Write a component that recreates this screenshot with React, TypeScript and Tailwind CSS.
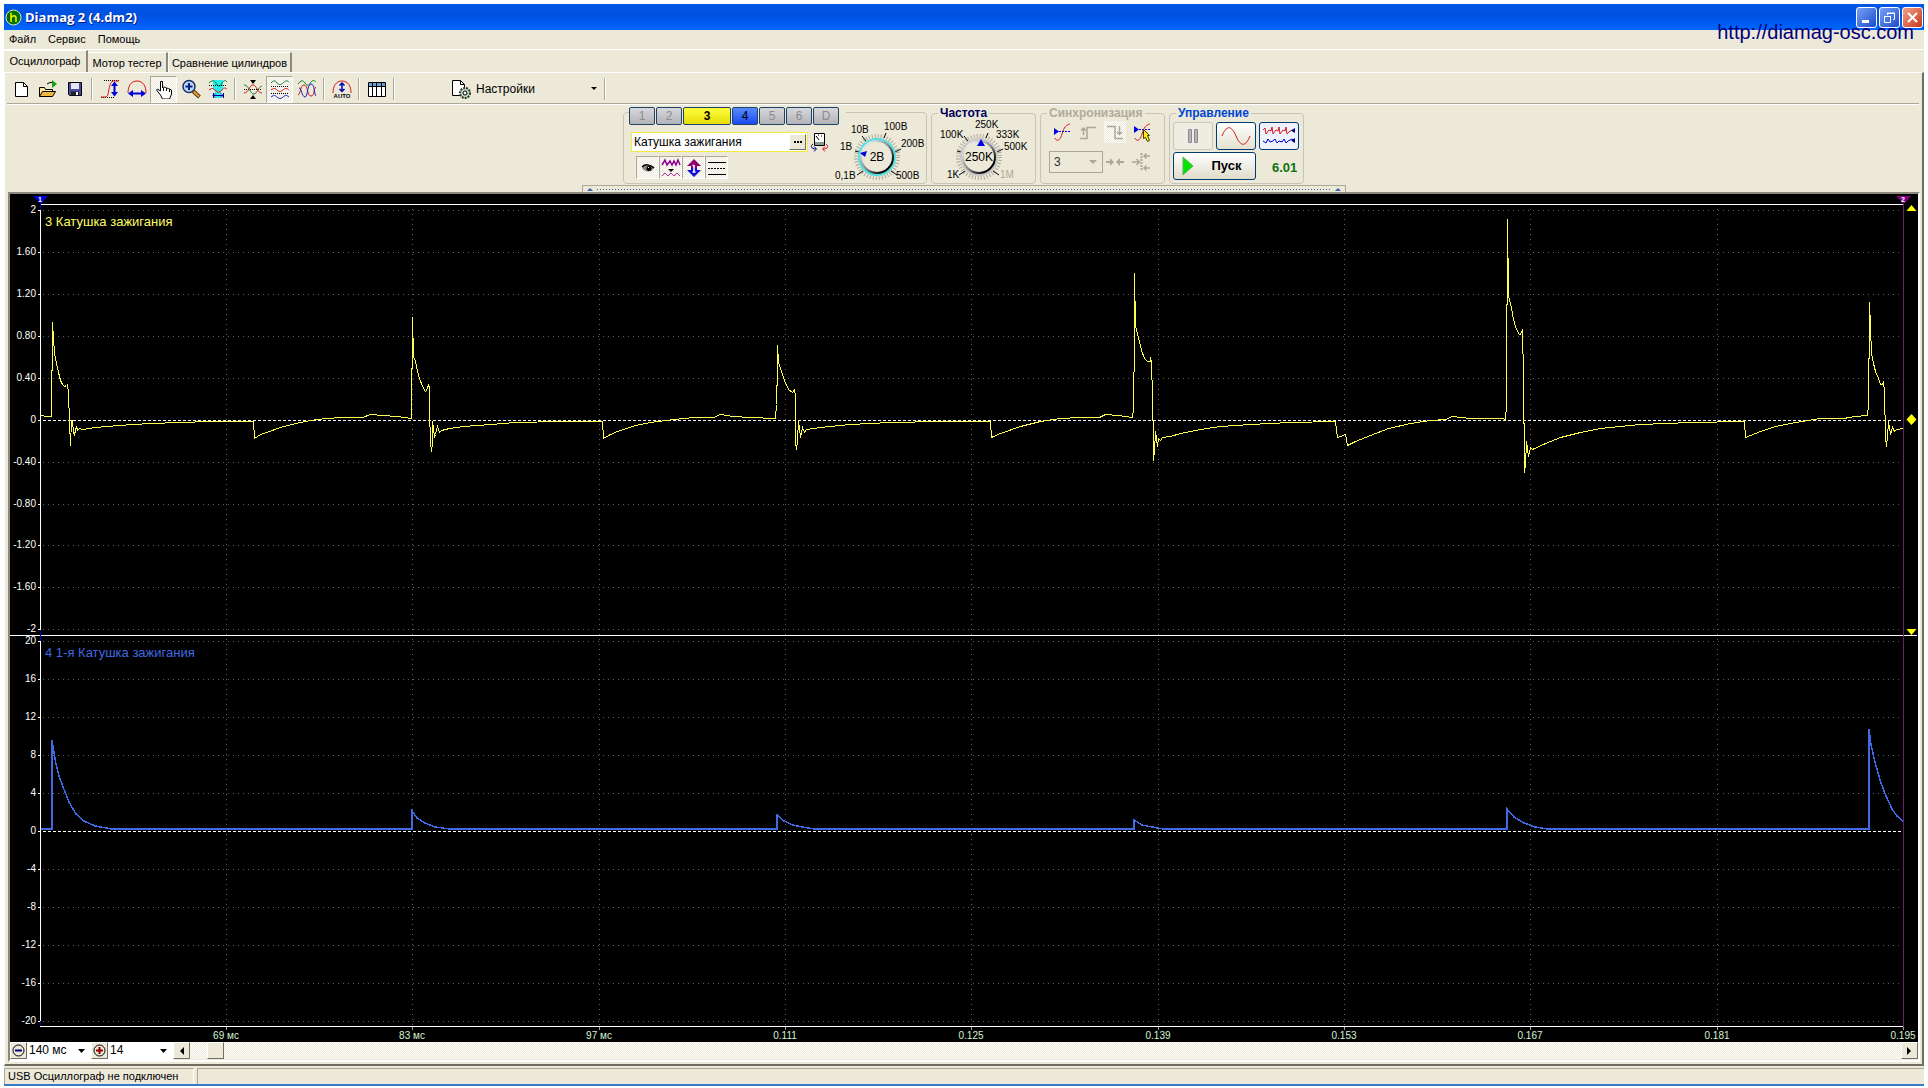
import React from 'react';
import clsx from 'clsx';

const GRID_X = [226, 412, 599, 785, 971, 1158, 1344, 1530, 1717, 1903];
const X_LABELS = ['69 мс', '83 мс', '97 мс', '0.111', '0.125', '0.139', '0.153', '0.167', '0.181', '0.195'];

const CH3_AXIS = [
  { y: 210, label: '2' },
  { y: 252, label: '1.60' },
  { y: 294, label: '1.20' },
  { y: 336, label: '0.80' },
  { y: 378, label: '0.40' },
  { y: 420, label: '0' },
  { y: 462, label: '-0.40' },
  { y: 504, label: '-0.80' },
  { y: 545, label: '-1.20' },
  { y: 587, label: '-1.60' },
  { y: 629, label: '-2' },
];

const CH4_AXIS = [
  { y: 641, label: '20' },
  { y: 679, label: '16' },
  { y: 717, label: '12' },
  { y: 755, label: '8' },
  { y: 793, label: '4' },
  { y: 831, label: '0' },
  { y: 869, label: '-4' },
  { y: 907, label: '-8' },
  { y: 945, label: '-12' },
  { y: 983, label: '-16' },
  { y: 1021, label: '-20' },
];

const CH3_WAVE =
  '41,415 46,416 51,416 51,370 52,370 52,322 53,338 54,353 56,363 58,372 60,380 62,384 64,386 66,385 67,384 68,393 69,422 70,445 71,420 72,420 73,432 74,434 76,426 77,430 79,428 82,429 95,427 118,425 150,423 180,422 209,421 253,421 ' +
  '254,438 260,434 266,432 280,427 295,423 310,420 326,418 341,417 362,417 370,414 382,415 397,416 411,418 411,368 412,368 412,317 413,356 415,361 417,371 419,378 422,386 425,391 427,388 428,384 429,388 429,411 430,442 431,451 432,443 432,421 433,428 434,437 435,434 437,426 439,432 441,430 449,428 463,426 490,424 515,422 560,421 602,421 ' +
  '603,438 610,434 617,431 635,425 650,422 673,419 694,417 713,417 720,414 733,416 750,417 775,418 776,404 777,367 777,345 778,362 781,371 784,380 788,389 792,392 794,389 795,395 795,442 796,449 797,440 798,420 800,437 802,427 804,432 806,429 820,427 850,424 890,422 940,421 990,421 ' +
  '991,437 1000,433 1020,426 1040,421 1060,418 1080,417 1099,417 1105,414 1118,415 1132,417 1133,408 1134,337 1134,273 1135,326 1138,337 1141,350 1144,358 1147,361 1150,361 1150,357 1151,361 1152,397 1153,443 1153,460 1154,450 1155,431 1157,446 1158,438 1160,440 1162,437 1170,436 1180,433 1200,429 1220,426 1250,424 1290,422 1335,421 ' +
  '1337,437 1340,436 1345,434 1347,445 1355,441 1370,435 1388,428 1410,423 1430,420 1445,419 1452,416 1470,418 1503,418 1505,420 1506,404 1506,304 1507,304 1507,219 1508,295 1511,307 1513,319 1516,329 1519,334 1521,333 1522,329 1522,334 1523,372 1524,472 1525,464 1526,441 1528,456 1530,447 1532,449 1545,443 1560,437 1580,432 1600,428 1620,426 1640,424 1690,422 1744,421 ' +
  '1745,437 1760,431 1775,426 1795,422 1820,418 1843,418 1855,416 1867,415 1868,405 1868,358 1869,358 1869,302 1870,327 1871,353 1873,363 1875,371 1878,378 1880,384 1882,384 1883,381 1884,391 1885,437 1886,446 1887,436 1888,421 1890,434 1892,427 1894,431 1896,429 1903,428';

const CH4_WAVE =
  '41,829 52,829 52,740 54,752 56,764 59,776 63,787 69,802 76,814 84,821 95,826 112,829 ' +
  '412,829 412,811 417,818 425,823 435,827 450,829 777,829 777,815 784,821 793,825 802,827 815,829 ' +
  '1134,829 1134,820 1142,825 1152,827 1163,829 1507,829 1507,809 1514,817 1524,823 1535,827 1548,829 ' +
  '1869,829 1869,729 1871,745 1875,762 1880,780 1886,796 1892,809 1897,816 1903,821';

type IconProps = { children: React.ReactNode; w?: number; h?: number };

const Icon: React.FC<IconProps> = ({ children, w = 20, h = 20 }) => (
  <svg width={w} height={h} viewBox={`0 0 ${w} ${h}`} fill="none" className="shrink-0" aria-hidden="true">
    {children}
  </svg>
);

type ToolProps = { label: string; pressed?: boolean; children: React.ReactNode };

const Tool: React.FC<ToolProps> = ({ label, pressed, children }) => (
  <button
    type="button"
    aria-label={label}
    aria-pressed={pressed}
    className={clsx(
      'flex h-[27px] w-[27px] items-center justify-center border',
      pressed
        ? 'border-t-[#aca899] border-l-[#aca899] border-r-white border-b-white bg-[repeating-conic-gradient(#ece9d8_0_25%,#fff_0_50%)] bg-[length:2px_2px]'
        : 'border-transparent'
    )}
  >
    <Icon>{children}</Icon>
  </button>
);

const Separator = () => (
  <div className="flex w-2 justify-center">
    <div className="h-[22px] w-0.5 border-l border-[#aca899] bg-white" />
  </div>
);

const Toolbar = () => (
  <div role="toolbar" className="mr-[3px] ml-0.5 flex h-[31px] items-center border-b border-[#aca899] pt-0.5 shadow-[0_1px_0_white]">
    <Tool label="Новый">
      <path d="M4.5 3.5h8l4 4v10h-12z" fill="white" stroke="black" />
      <path d="M12.500 3.500v4h4" stroke="black" />
    </Tool>
    <Tool label="Открыть">
      <path d="M1.500 17.500v-9h5l1 2h7v3" fill="#ffe69a" stroke="black" />
      <path d="M1.500 17.500l3-5h13l-3 5z" fill="#f0b83c" stroke="black" />
      <path d="M9 5l3-1.500h3" stroke="black" />
      <path d="M14 1l5 4-5 4z" fill="#12a512" />
    </Tool>
    <Tool label="Сохранить">
      <path d="M3.500 3.500h13v13h-12l-1-1z" fill="#4a4aa0" stroke="black" />
      <path d="M6 4h8v6H6z" fill="#e8e8f4" />
      <path d="M6 12.500h8v4H6z" fill="#222" />
      <path d="M11 13h2v3h-2z" fill="white" />
    </Tool>
    <Separator />
    <Tool label="Размах">
      <path d="M4 1.500h15M1 18.500h13" stroke="black" strokeDasharray="1 1" />
      <path d="M1 18h4c3 0 3-3 4-8s2-8 5-8h5" stroke="#d81818" />
      <path d="M14.500 6v8" stroke="#0000d8" strokeWidth="2" />
      <path d="M11 7l3.500-4.500L18 7zM11 13l3.500 4.500L18 13z" fill="#0000d8" />
    </Tool>
    <Tool label="Длительность">
      <path d="M1 14c0-7 3-12 9-12s9 5 9 12" stroke="#d81818" />
      <path d="M5 14.500h10" stroke="#0000d8" strokeWidth="2" />
      <path d="M6 11l-5 3.500L6 18zM14 11l5 3.500-5 3.500z" fill="#0000d8" />
    </Tool>
    <Tool label="Рука" pressed>
      <path
        d="M6.500 12V2.500h2V9l1-1 2 .5 1 .5 2 .5 1 .5 2 1v4l-2 5h-7l-2-4-4-5 1-1z"
        fill="white"
        stroke="black"
      />
      <path d="M9.500 9v3M12.500 9v3M15.500 10v3" stroke="black" />
    </Tool>
    <Tool label="Увеличить">
      <path d="M12 12l6.500 6" stroke="#5a3808" strokeWidth="4" />
      <path d="M12 12l6 5.500" stroke="#e8a030" strokeWidth="2" />
      <circle cx="8" cy="7.500" r="6" fill="#b8d8f8" stroke="#1c2c60" strokeWidth="1.500" />
      <path d="M4.500 7.500h7M8 4v7" stroke="#102080" strokeWidth="2" />
    </Tool>
    <Tool label="Участок">
      <path d="M5 1h10v9l-2 2v7H7v-7l-2-2z" fill="#20f0f0" />
      <path d="M1 4c3-3 5-3 7 0 2 4 4 4 6 0 2-3 3-3 5-1" stroke="#108030" />
      <path d="M1 6.500h18" stroke="black" strokeDasharray="1 1" />
      <path d="M1 11c3-2 4-2 6 0 3 3 5 3 7 0s3-2 5-1" stroke="#d81818" />
      <path d="M5 16.500h10M7 14.500l-2 2 2 2M13 14.500l2 2-2 2M5.500 14v5M15.500 14v5" stroke="#0000a0" />
    </Tool>
    <Separator />
    <Tool label="Центр">
      <path d="M1 10.500h18" stroke="black" strokeDasharray="1 1" />
      <path d="M1 6c5 0 6 9 10 9 3 0 4-7 8-8" stroke="#108030" />
      <path d="M1 14c5 0 5-8 9-8s4 8 9 8" stroke="#d81818" />
      <path d="M7 1h6l-3 4zM7 20h6l-3-4z" fill="black" />
    </Tool>
    <Tool label="Раздельно" pressed>
      <path d="M1 4c3-3 4-3 6 0 2 2 4 2 6 0s4-3 6-1" stroke="#108030" />
      <path d="M1 7.500h18M1 14.500h18" stroke="black" strokeDasharray="1 1" />
      <path d="M1 11c3-2 4-2 6 0 2 2 4 2 6 0s4-2 6 0" stroke="#d81818" />
      <path d="M1 18c3-2 4-2 6 0 2 2 4 2 6 0s4-2 6 0" stroke="#2020c8" />
    </Tool>
    <Tool label="Вместе">
      <path d="M1 5c3-4 5-4 7-1 3 4 4 2 6-1 2-2 3-2 5 0" stroke="#108030" />
      <path d="M1 16C4 15 3 6 7 6s3 11 7 11 2-7 5-9" stroke="#d81818" />
      <path d="M2 9c2-1 3 9 6 9s2-13 6-13 3 11 5 12" stroke="#2020c8" />
    </Tool>
    <Separator />
    <Tool label="Авто">
      <path d="M1 14c0-7 3-12 9-12s9 5 9 12" stroke="#d81818" />
      <path d="M10 4v8M7.500 6.500L10 4l2.500 2.500M7.500 10l2.500 2.500 2.500-2.500" stroke="#0000b0" strokeWidth="1.500" />
      <text x="10" y="19" textAnchor="middle" className="fill-black font-['Liberation_Sans'] text-[6px] font-bold">
        AUTO
      </text>
    </Tool>
    <Separator />
    <Tool label="Таблица">
      <path d="M1.500 3.500h17v14h-17z" fill="white" stroke="black" />
      <path d="M2 4h16v3H2z" fill="#6aa0d0" />
      <path d="M1.500 7.500h17M5.500 4v13M9.500 4v13M14.500 4v13" stroke="black" />
    </Tool>
    <Separator />
    <button type="button" className="ml-[51px] flex h-[27px] w-[152px] items-center gap-1 pl-0.5">
      <Icon w={21} h={22}>
        <path d="M1.500 2.500h8l4 4v11h-12z" fill="white" stroke="black" />
        <path d="M9.500 2.500v4h4" stroke="black" />
        <circle cx="14" cy="15" r="5" fill="#c4d4c4" stroke="#2c3c34" strokeWidth="2" strokeDasharray="2 1" />
        <circle cx="14" cy="15" r="2" fill="white" stroke="black" />
      </Icon>
      <span className="flex-1 text-left">Настройки</span>
      <svg width="6" height="4" className="mr-1" aria-hidden="true">
        <path d="M0 0h6L3 3z" />
      </svg>
    </button>
    <Separator />
  </div>
);

const CHANNELS = [
  { name: '1', style: 'w-[26px] bg-linear-to-b from-[#d8d8dc] to-[#b4b4b8] text-[#8c8c90]' },
  { name: '2', style: 'w-[26px] bg-linear-to-b from-[#d8d8dc] to-[#b4b4b8] text-[#8c8c90]' },
  { name: '3', style: 'w-12 bg-linear-to-b from-[#ffff38] to-[#e6dc00] font-bold text-black' },
  { name: '4', style: 'w-[26px] bg-linear-to-b from-[#5a88ff] to-[#1c48f0] text-black' },
  { name: '5', style: 'w-[26px] bg-linear-to-b from-[#d8d8dc] to-[#b4b4b8] text-[#8c8c90]' },
  { name: '6', style: 'w-[26px] bg-linear-to-b from-[#d8d8dc] to-[#b4b4b8] text-[#8c8c90]' },
  { name: 'D', style: 'w-[26px] bg-linear-to-b from-[#d8d8dc] to-[#b4b4b8] text-[#8c8c90]' },
];

type Mark = { x: number; y: number; text: string; muted?: boolean };
type KnobProps = { id: string; cx: number; value: string; marks: Mark[]; ring: string; pointer: string; w: number };

const Knob: React.FC<KnobProps> = ({ id, cx, value, marks, ring, pointer, w }) => (
  <svg width={w} height="66" viewBox={`0 0 ${w} 66`} role="img" aria-label={value}>
    <defs>
      <linearGradient id={id} x1="0" y1="0" x2="1" y2="1">
        <stop offset="0.15" stopColor="#f0f0f0" />
        <stop offset="0.5" stopColor="#888888" />
        <stop offset="0.8" stopColor="#000000" />
      </linearGradient>
    </defs>
    <circle cx={cx} cy="38" r="21" fill="none" stroke="#aca899" strokeWidth="4" strokeDasharray="1 2" />
    <path d={`M${cx - 14} 52l-6 4M${cx + 14} 52l6 4M${cx + 18} 33l6-3M${cx - 18} 33l-4-1M${cx - 11} 22l-4-5M${cx + 7} 19l2-5`} stroke="black" />
    <circle cx={cx} cy="38" r="18" fill={`url(#${id})`} stroke={ring} strokeWidth="2" />
    <circle cx={cx} cy="38" r="15" fill="#ece9d8" />
    <path d={pointer} fill="#0000e0" />
    <text x={cx} y="42" textAnchor="middle" className="fill-black text-[12px]">
      {value}
    </text>
    {marks.map((m) => (
      <text key={m.text} x={m.x} y={m.y} className={clsx('text-[10px]', m.muted ? 'fill-[#aca899]' : 'fill-black')}>
        {m.text}
      </text>
    ))}
  </svg>
);

type GroupProps = { title: string; titleClass: string; className: string; children: React.ReactNode };

const Group: React.FC<GroupProps> = ({ title, titleClass, className, children }) => (
  <fieldset className={clsx('mt-px h-[78px] rounded border border-[#c9c5b4]', className)}>
    <legend className={clsx('ml-1.5 px-0.5 text-[12px] leading-[14px] font-bold', titleClass)}>{title}</legend>
    {children}
  </fieldset>
);

type ToggleProps = { label: string; children: React.ReactNode };

const Toggle: React.FC<ToggleProps> = ({ label, children }) => (
  <button
    type="button"
    aria-label={label}
    aria-pressed="true"
    className="flex h-[23px] w-[23px] items-center justify-center border border-white border-t-[#aca899] border-l-[#aca899] bg-[repeating-conic-gradient(#ece9d8_0_25%,#fff_0_50%)] bg-[length:2px_2px]"
  >
    <Icon>{children}</Icon>
  </button>
);

const ChannelGroup = () => (
  <div className="mt-[7px] flex h-[72px] w-[304px] rounded border border-[#c9c5b4]">
    <div className="w-[208px] shrink-0 pl-[5px]">
      <div className="-mt-1.5 flex w-[217px] gap-px bg-[#ece9d8]">
        {CHANNELS.map((ch) => (
          <button
            key={ch.name}
            type="button"
            className={clsx('h-[18px] rounded-[2px] border border-[#1c4468] text-[12px] leading-[16px]', ch.style)}
          >
            {ch.name}
          </button>
        ))}
      </div>
      <div className="mt-[7px] ml-0.5 flex items-center gap-0.5">
        <div className="flex h-5 w-[177px] items-center border border-[#f4ec40] bg-white p-px">
          <input
            aria-label="Название канала"
            defaultValue="Катушка зажигания"
            className="min-w-0 flex-1 pl-px text-[12px] outline-none"
          />
          <button
            type="button"
            aria-label="Выбрать"
            className="flex h-4 w-[17px] items-center justify-center gap-px border border-t-white border-l-white border-r-[#716f64] border-b-[#716f64] bg-[#ece9d8]"
          >
            <span className="size-0.5 bg-black" />
            <span className="size-0.5 bg-black" />
            <span className="size-0.5 bg-black" />
          </button>
        </div>
        <button type="button" aria-label="Датчик">
          <Icon>
            <path d="M4.500 1.500h10v12h-10z" fill="white" stroke="black" />
            <path d="M5 10h9v3H5z" fill="#8c9c8c" />
            <path d="M9 8L6 4M11 4h1M8 3h1" stroke="black" />
            <path d="M3 12c-3 2-2 5 3 5M4 14.500L6.500 17 4 19.500" stroke="#000090" />
            <path d="M16 12c3 2 2 5-3 5M15 14.500L12.500 17l2.500 2.500" stroke="#d81818" />
          </Icon>
        </button>
      </div>
      <div className="mt-1 ml-[7px] flex">
        <Toggle label="Видимость">
          <path d="M4 10c2-4 10-4 12 0-2 4-9 5-12 0z" fill="#8c8c80" />
          <path d="M4 9c3-3 8-3 12 1" stroke="black" strokeWidth="1.500" />
          <circle cx="11" cy="10.500" r="2.500" fill="black" />
          <path d="M10 9h1v1h-1z" fill="white" />
        </Toggle>
        <Toggle label="Фильтр">
          <path d="M1 7l3-5 2 5 3-4 2 4 2-4 2 4 2-5 2 5" stroke="#900090" strokeWidth="1.500" />
          <path d="M7 11h6l-3 3z" fill="black" />
          <path d="M1 18l3-3 3 3 3-3 3 3 3-3 3 3" stroke="#b030a0" />
        </Toggle>
        <Toggle label="Инверсия">
          <path d="M10 1l7 7h-4v2H7V8H3z" fill="#900070" />
          <path d="M10 19l7-7h-4v-2H7v2H3z" fill="#1010d8" />
          <path d="M10 7v7M8.500 7.500H10M8.500 14h3" stroke="white" strokeWidth="1.500" />
        </Toggle>
        <Toggle label="Уровни">
          <path d="M1 4.500h18M1 16.500h18" stroke="black" />
          <path d="M1 10.500h18" stroke="black" strokeDasharray="2 1" />
        </Toggle>
      </div>
    </div>
    <div className="-ml-px pt-1.5">
      <Knob
        id="volts"
        w={94}
        cx={46}
        value="2В"
        ring="#50e0e0"
        pointer="M29 34l7-2-2 6z"
        marks={[
          { x: 20, y: 14, text: '10В' },
          { x: 53, y: 11, text: '100В' },
          { x: 70, y: 28, text: '200В' },
          { x: 65, y: 60, text: '500В' },
          { x: 4, y: 60, text: '0,1В' },
          { x: 9, y: 31, text: '1В' },
        ]}
      />
    </div>
  </div>
);

const SyncGroup = () => (
  <Group title="Синхронизация" titleClass="text-[#b0ac9c]" className="w-[125px]">
    <div className="flex h-6 items-center justify-between pr-3 pl-[11px]">
      <button type="button" aria-label="По уровню">
        <Icon>
          <path d="M3 16c2 4 5 3 7-4S14 3 18 2" stroke="#d81818" />
          <path d="M4 9.500h14" stroke="#0000d8" strokeDasharray="2 1" />
          <path d="M2 6l5 3.500L2 13z" fill="#0000d8" />
        </Icon>
      </button>
      <button type="button" aria-label="Фронт">
        <Icon>
          <path d="M2 16.500h7v-11h9M5.500 6v7M3 8.500L5.500 6 8 8.500" stroke="#aca899" strokeWidth="1.500" />
        </Icon>
      </button>
      <button type="button" aria-label="Спад" className="bg-[repeating-conic-gradient(#ece9d8_0_25%,#fff_0_50%)] bg-[length:2px_2px] p-px">
        <Icon>
          <path d="M2 4.500h8v12h8M14.500 4v8M12 10l2.500 2.500L17 10" stroke="#aca899" strokeWidth="1.500" />
        </Icon>
      </button>
      <button type="button" aria-label="Указать">
        <Icon>
          <path d="M3 16c2 4 5 3 7-4S14 3 18 2" stroke="#d81818" />
          <path d="M4 7.500h14" stroke="#0000d8" strokeDasharray="2 1" />
          <path d="M2 4l5 3.500L2 11z" fill="#0000d8" />
          <path d="M11.500 7.500l6 6h-2l2 5-2 1-2-4-2 1z" fill="#fff000" stroke="#403800" />
        </Icon>
      </button>
    </div>
    <div className="mt-[7px] flex items-center gap-0.5 pl-2">
      <div className="relative">
        <select disabled aria-label="Канал синхронизации" className="h-[22px] w-[54px] appearance-none border border-[#aca899] pl-1 text-[12px] text-[#303030] opacity-100">
          <option>3</option>
        </select>
        <svg width="8" height="5" className="pointer-events-none absolute top-[9px] right-1.5" aria-hidden="true">
          <path d="M0 0h8L4 4z" fill="#aca899" />
        </svg>
      </div>
      <button type="button" aria-label="Сжать">
        <Icon>
          <path d="M1 9h4V6l4 4-4 4v-3H1zM19 9h-4V6l-4 4 4 4v-3h4z" fill="#aca899" />
        </Icon>
      </button>
      <button type="button" aria-label="К линии" className="ml-1">
        <Icon>
          <path d="M10.500 1v18" stroke="#aca899" strokeWidth="2" strokeDasharray="2 1" />
          <path d="M1 10h7M5.500 7L8.500 10l-3 3M19 4h-6M15.500 1.500L13 4l2.500 2.500M19 16h-6M15.500 13.500L13 16l2.500 2.500" stroke="#aca899" strokeWidth="1.500" />
        </Icon>
      </button>
    </div>
  </Group>
);

const ControlGroup = () => (
  <Group title="Управление" titleClass="text-[#0046d5]" className="w-[135px]">
    <div className="flex gap-[3px] pt-0.5 pl-[3px]">
      <button type="button" aria-label="Пауза" disabled className="flex h-7 w-10 items-center justify-center rounded-[3px] border border-[#c9c7ba] bg-[#efede2]">
        <Icon>
          <path d="M5.500 3.500h3v13h-3zM11.500 3.500h3v13h-3z" fill="#b4b4b8" stroke="#8c8c90" />
        </Icon>
      </button>
      <button type="button" aria-label="Один кадр" className="flex h-7 w-10 items-center justify-center rounded-[3px] border border-[#003c74] bg-linear-to-b from-white to-[#e4e0d0]">
        <Icon w={32} h={22}>
          <path d="M2 11C6 1 11-1 16 11s10 10 14 0" stroke="#d81818" />
        </Icon>
      </button>
      <button type="button" aria-label="Непрерывно" aria-pressed="true" className="flex h-7 w-10 items-center justify-center rounded-[3px] border border-[#003c74] bg-[#eef2ff]">
        <Icon w={34} h={22}>
          <path d="M1 5l2-2 1 6 3-4 2 1 1-4 1 7 3-4 2 1 1-4 1 7 3-4 2 1 1-4 1 7 3-3 4-1" stroke="#d81818" />
          <path d="M1 16l3 2 2-4 2 3 3-1 2-2 2 4 2-2 3 1 2-3 2 4 2-2 4-2 2 2" stroke="#0000d0" />
          <path d="M33 3v5l-4-2.500zM33 13v5l-4-2.500z" fill="#000080" />
        </Icon>
      </button>
    </div>
    <div className="flex items-center gap-4 pt-0.5 pl-[3px]">
      <button type="button" className="flex h-7 w-[83px] items-center rounded-[3px] border border-[#003c74] bg-linear-to-b from-white to-[#e0dccb] pl-2 text-[13px] font-bold">
        <svg width="12" height="20" aria-hidden="true">
          <path d="M1 1l10 9-10 9z" fill="#00e400" stroke="#60b060" />
        </svg>
        <span className="flex-1 pl-1">Пуск</span>
      </button>
      <span className="pt-1 text-[13px] font-bold text-[#107010]">6.01</span>
    </div>
  </Group>
);

const ControlPanel = () => (
  <div className="flex h-[88px] flex-col items-center justify-between pt-px">
    <div className="flex gap-1">
      <ChannelGroup />
      <Group title="Частота" titleClass="text-[#00005a]" className="w-[105px]">
        <div className="-mt-px">
          <Knob
            id="rate"
            w={103}
            cx={47}
            value="250K"
            ring="#c8c8c8"
            pointer="M49 20l4 7h-8z"
            marks={[
              { x: 43, y: 9, text: '250K' },
              { x: 8, y: 19, text: '100K' },
              { x: 64, y: 19, text: '333K' },
              { x: 72, y: 31, text: '500K' },
              { x: 15, y: 59, text: '1K' },
              { x: 68, y: 59, text: '1M', muted: true },
            ]}
          />
        </div>
      </Group>
      <SyncGroup />
      <ControlGroup />
    </div>
    <div className="flex h-[7px] w-[764px] items-center gap-1 border border-[#aca899] border-b-0 px-1">
      <svg width="6" height="3" aria-hidden="true">
        <path d="M3 0l3 3H0z" fill="#3a64a8" />
      </svg>
      <div className="h-px flex-1 bg-[repeating-linear-gradient(90deg,#3a64a8_0_1px,transparent_1px_3px)]" />
      <svg width="6" height="3" aria-hidden="true">
        <path d="M3 0l3 3H0z" fill="#3a64a8" />
      </svg>
    </div>
  </div>
);

const Scope = () => (
  <svg viewBox="10 194 1908 848" className="block h-auto w-full bg-black" role="img" aria-label="Осциллограмма">
    <g shapeRendering="crispEdges" fill="none">
      {GRID_X.slice(0, -1).map((x) => (
        <path key={x} d={`M${x}.5 209V1026`} stroke="#5c5c5c" strokeDasharray="1 4" />
      ))}
      {[...CH3_AXIS, ...CH4_AXIS].map(({ y, label }) => (
        <React.Fragment key={y}>
          <path
            d={`M43 ${y}.5H1903`}
            stroke={label === '0' ? '#ffffff' : '#5c5c5c'}
            strokeDasharray={label === '0' ? '3 2' : '1 4'}
          />
          <path d={`M38 ${y}.5h3`} stroke="white" />
        </React.Fragment>
      ))}
      {GRID_X.map((x) => (
        <path key={x} d={`M${x}.5 1027v3`} stroke="#a0a0a0" />
      ))}
      <path d="M40.500 204V1027M40 204.500H1903M10 635.500H1917M40 1026.500H1903" stroke="white" />
      <path d="M40.500 203v7M40.500 630v11M40.500 1021v5" stroke="#0000b4" />
      <polyline points={CH3_WAVE} stroke="#ffff50" transform="translate(.5 .5)" />
      <polyline points={CH4_WAVE} stroke="#4169e1" strokeWidth="1.500" />
      <path d="M1903.500 203V1027" stroke="#6a206a" />
    </g>
    <path d="M33 196h15l-7 8z" fill="#0000d0" />
    <path d="M1896 196h15l-7 8z" fill="#800080" />
    <path d="M1911.500 205l5 6h-10zM1911.500 414l5 5.500-5 5.500-5-5.500zM1906.500 629h10l-5 6z" fill="#ffff00" />
    <g className="font-['Liberation_Sans',sans-serif] text-[10px]">
      <g fill="white" textAnchor="middle" className="text-[7px] font-bold">
        <text x="40" y="202">1</text>
        <text x="1903" y="202">2</text>
      </g>
      {[...CH3_AXIS, ...CH4_AXIS].map(({ y, label }) => (
        <text key={y} x="36" y={y + 3} textAnchor="end" fill="white">
          {label}
        </text>
      ))}
      {X_LABELS.map((label, i) => (
        <text key={label} x={GRID_X[i]} y="1039" textAnchor="middle" fill="#d4f4d4">
          {label}
        </text>
      ))}
    </g>
    <g className="font-['Liberation_Sans',sans-serif] text-[13px]">
      <text x="45" y="226" fill="#ffff66">3 Катушка зажигания</text>
      <text x="45" y="657" fill="#4169e1">4 1-я Катушка зажигания</text>
    </g>
  </svg>
);

type PickerProps = { label: string; value: string; color: string; plus?: boolean; className: string };

const Picker: React.FC<PickerProps> = ({ label, value, color, plus, className }) => (
  <div className={clsx('flex bg-white', className)}>
    <button
      type="button"
      aria-label={plus ? 'Увеличить' : 'Уменьшить'}
      className="flex h-[17px] w-[17px] items-center justify-center border border-t-white border-l-white border-r-[#716f64] border-b-[#716f64] bg-[#ece9d8]"
    >
      <svg width="13" height="13" fill="none" className="shrink-0" aria-hidden="true">
        <circle cx="6.500" cy="6.500" r="5.500" stroke="black" />
        <path d={plus ? 'M3 6.500h7M6.500 3v7' : 'M3 6.500h7'} stroke={color} strokeWidth="2" />
      </svg>
    </button>
    <div className="relative flex-1">
      <select aria-label={label} className="h-[17px] w-full appearance-none pl-0.5 text-[12px] leading-[17px]">
        <option>{value}</option>
      </select>
      <svg width="7" height="4" className="pointer-events-none absolute top-[7px] right-1.5" aria-hidden="true">
        <path d="M0 0h7L3.500 4z" />
      </svg>
    </div>
  </div>
);

const BottomBar = () => (
  <div className="flex h-[18px] bg-[#ece9d8]">
    <Picker label="Развёртка" value="140 мс" color="#000080" className="w-[81px]" />
    <Picker label="Масштаб" value="14" color="#900000" plus className="w-[82px]" />
    <button type="button" aria-label="Влево" className="flex h-[17px] w-[17px] items-center justify-center border border-t-white border-l-white border-r-[#716f64] border-b-[#716f64]">
      <svg width="5" height="8" aria-hidden="true">
        <path d="M5 0v8L1 4z" />
      </svg>
    </button>
    <div className="flex h-[17px] flex-1 bg-[repeating-conic-gradient(#ece9d8_0_25%,#fff_0_50%)] bg-[length:2px_2px] pl-[17px]">
      <div className="w-[17px] border border-t-white border-l-white border-r-[#716f64] border-b-[#716f64] bg-[#ece9d8]" />
    </div>
    <button type="button" aria-label="Вправо" className="flex h-[17px] w-[17px] items-center justify-center border border-t-white border-l-white border-r-[#716f64] border-b-[#716f64]">
      <svg width="5" height="8" aria-hidden="true">
        <path d="M0 0v8l4-4z" />
      </svg>
    </button>
  </div>
);

const TitleBar = () => (
  <header className="flex h-[26px] items-center gap-0.5 bg-linear-to-b from-[#0058e6] via-[#0050e0] via-40% to-[#0066ff] px-px">
    <svg width="17" height="17" aria-hidden="true">
      <circle cx="8.500" cy="8.500" r="7.500" fill="#007000" stroke="#e0f0c0" />
      <path d="M6 3.500v9.500M6 9c1-3 5-3 5 0v4" fill="none" stroke="#f4f400" strokeWidth="1.500" />
    </svg>
    <h1 className="flex-1 pl-px font-['Open_Sans',sans-serif] text-[13px] font-bold text-white [text-shadow:1px_1px_#0a1883]">
      Diamag 2 (4.dm2)
    </h1>
    <div className="flex gap-0.5">
      <button type="button" aria-label="Свернуть" className="flex size-[21px] items-center justify-center rounded-[3px] border border-white bg-linear-to-br from-[#7aa0f4] to-[#1c48cc]">
        <svg width="13" height="13" aria-hidden="true">
          <path d="M2 9h7v3H2z" fill="white" />
        </svg>
      </button>
      <button type="button" aria-label="Восстановить" className="flex size-[21px] items-center justify-center rounded-[3px] border border-white bg-linear-to-br from-[#7aa0f4] to-[#1c48cc]">
        <svg width="13" height="13" fill="none" stroke="white" aria-hidden="true">
          <path d="M4.500 4V2.500h7v6H10M4 2h8M1.500 5.500h6v6h-6zM1 5.500h7" />
        </svg>
      </button>
      <button type="button" aria-label="Закрыть" className="flex size-[21px] items-center justify-center rounded-[3px] border border-white bg-linear-to-br from-[#f0a088] to-[#c83010]">
        <svg width="13" height="13" aria-hidden="true">
          <path d="M2 2l9 9M11 2l-9 9" stroke="white" strokeWidth="2" />
        </svg>
      </button>
    </div>
  </header>
);

const App: React.FC = () => {
  return (
    <div className="relative min-h-screen bg-white px-1 pt-1 font-['Liberation_Sans',sans-serif] text-[12px] leading-[14px] text-black">
      <div className="bg-[#ece9d8]">
        <TitleBar />

        <nav className="flex h-5 items-center gap-3 border-b border-white pb-0.5 pl-[5px] text-[11px]">
          <button type="button">Файл</button>
          <button type="button">Сервис</button>
          <button type="button">Помощь</button>
        </nav>

        {/* Tabs */}
        <div role="tablist" className="flex h-[22px] items-end text-[11px] whitespace-nowrap">
          <button type="button" role="tab" aria-selected="true" className="h-[22px] w-[84px] border-t border-r-2 border-t-white border-r-[#8c897c] pb-0.5">
            Осциллограф
          </button>
          <button type="button" role="tab" aria-selected="false" className="h-5 w-20 border-t border-r-2 border-t-white border-r-[#8c897c]">
            Мотор тестер
          </button>
          <button type="button" role="tab" aria-selected="false" className="h-5 w-[124px] border-t border-l border-r-2 border-t-white border-l-white border-r-[#8c897c]">
            Сравнение цилиндров
          </button>
        </div>

        {/* Tab page */}
        <main className="border-t border-r-2 border-b-2 border-l border-t-white border-r-[#716f64] border-b-[#716f64] border-l-white pb-0.5">
          <Toolbar />
          <ControlPanel />
          <div className="mr-0.5 ml-[3px] border-2 border-t-[#8c897c] border-r-white border-b-white border-l-[#8c897c]">
            <Scope />
            <BottomBar />
          </div>
        </main>

        <footer className="mt-0.5 flex h-4 gap-[3px] text-[11px] whitespace-nowrap">
          <div className="w-[190px] border-t border-r border-l border-[#aca899] border-r-white pl-[3px]">
            USB Осциллограф не подключен
          </div>
          <div className="flex-1 border-t border-l border-[#aca899]" />
        </footer>
        <div className="h-0.5 bg-[#3a78c8]" />
      </div>

      <a href="http://diamag-osc.com" className="absolute top-5 right-3.5 text-[20px] leading-6 text-[#00007b]">
        http://diamag-osc.com
      </a>
    </div>
  );
};

export default App;
